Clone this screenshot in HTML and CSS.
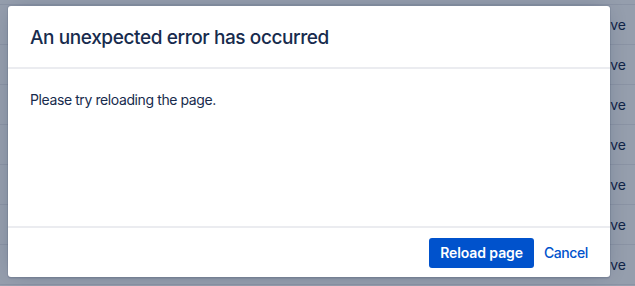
FILE: index.html
```html
<!DOCTYPE html>
<html lang="en">
<head>
  <meta charset="UTF-8" />
  <meta name="viewport" content="width=device-width, initial-scale=1.0" />
  <title>Error</title>
  <link rel="stylesheet" href="styles.css">
</head>
<body>
  <div class="rows">
    <div class="row row-top"></div>
    <div class="row"><span>Remove</span></div>
    <div class="row"><span>Remove</span></div>
    <div class="row"><span>Remove</span></div>
    <div class="row"><span>Remove</span></div>
    <div class="row"><span>Remove</span></div>
    <div class="row"><span>Remove</span></div>
    <div class="row"><span>Remove</span></div>
  </div>
  <div class="blanket"></div>
  <div class="dialog">
    <div class="dialog-header">
      <h1>An unexpected error has occurred</h1>
    </div>
    <div class="dialog-body">
      <p>Please try reloading the page.</p>
    </div>
    <div class="dialog-footer">
      <button class="primary">Reload page</button>
      <button class="link">Cancel</button>
    </div>
  </div>
</body>
</html>
```

FILE: styles.css
```css
body {
  margin: 0;
  height: 286px;
  overflow: hidden;
  background: #fff;
  font-family: Inter, "Noto Sans", sans-serif;
  color: #172b4d;
  position: relative;
}
.row {
  height: 39px;
  border-bottom: 1px solid #ebecf0;
  display: flex;
  align-items: center;
  justify-content: flex-end;
  padding-right: 9px;
  font-size: 14px;
}
.row-top { height: 4px; }
.blanket {
  position: absolute;
  inset: 0;
  background: rgba(9, 30, 66, 0.43);
}
.dialog {
  position: absolute;
  left: 8px;
  top: 6px;
  width: 602px;
  height: 271px;
  background: #fff;
  border-radius: 3px;
  display: flex;
  flex-direction: column;
  box-shadow: 0 0 0 1px rgba(9,30,66,0.08), 0 2px 1px rgba(9,30,66,0.08), 0 0 20px -6px rgba(9,30,66,0.31);
}
.dialog-header {
  height: 61px;
  display: flex;
  align-items: center;
  padding: 0 22px;
  border-bottom: 2px solid #ebecf0;
}
.dialog-header h1 {
  margin: 0;
  font-size: 19px;
  font-weight: 500;
  letter-spacing: -0.4px;
  padding-top: 2px;
}
.dialog-body {
  flex: 1;
  padding: 0 22px;
  border-bottom: 2px solid #ebecf0;
}
.dialog-body p {
  margin: 21px 0 0;
  font-size: 14px;
  line-height: 20px;
  letter-spacing: -0.4px;
}
.dialog-footer {
  height: 49px;
  display: flex;
  align-items: center;
  justify-content: flex-end;
  padding: 0 22px 0 0;
  gap: 10px;
}
button {
  font-family: inherit;
  font-size: 14px;
  border: none;
  border-radius: 3px;
  height: 30px;
  padding: 0 11px;
  cursor: pointer;
}
.primary {
  background: #0052cc;
  color: #fff;
  font-weight: 600;
  letter-spacing: -0.1px;
}
.link {
  background: none;
  color: #0052cc;
  font-weight: 500;
  padding: 0;
  letter-spacing: -0.4px;
}
```
